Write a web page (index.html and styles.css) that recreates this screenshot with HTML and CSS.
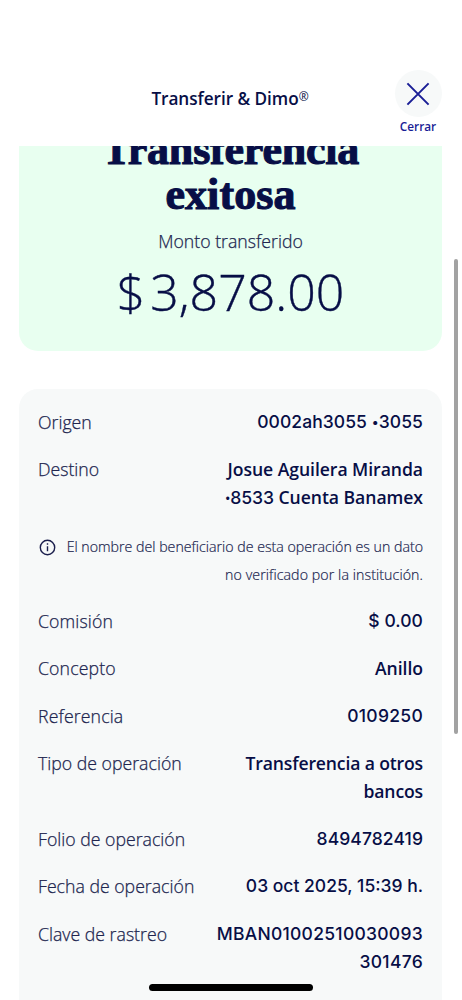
FILE: index.html
```
<!DOCTYPE html>
<html lang="es">
<head>
<meta charset="utf-8">
<title>Transferir &amp; Dimo</title>
<link rel="stylesheet" href="styles.css">
</head>
<body>
<div class="screen">
  <header class="topbar">
    <h1 class="title">Transferir &amp; Dimo<span class="reg">®</span></h1>
    <button class="close">
      <span class="close-circle">
        <svg width="24" height="24" viewBox="0 0 24 24" fill="none" stroke="#1a1e96" stroke-width="2"><path d="M1.4 1.4 22.6 22.6M22.6 1.4 1.4 22.6"/></svg>
      </span>
      <span class="close-label">Cerrar</span>
    </button>
  </header>
  <main class="content">
    <section class="success">
      <h2 class="headline">Transferencia<br><span class="headline-end">exitosa</span></h2>
      <p class="caption">Monto transferido</p>
      <p class="amount"><span class="currency">$</span>3,878.00</p>
    </section>
    <dl class="details">
      <div class="row"><dt>Origen</dt><dd class="num origin">0002ah3055 <span class="dot">•</span>3055</dd></div>
      <div class="row"><dt>Destino</dt><dd>Josue Aguilera Miranda<br><span class="dot">•</span><span class="account">8533</span> Cuenta Banamex</dd></div>
      <div class="note">
        <svg class="info" width="17" height="17" viewBox="0 0 17 17" fill="none" stroke="#1b1f4d" stroke-width="1.4"><circle cx="8.5" cy="8.5" r="7.2"/><path d="M8.5 7.2v5M8.5 4.2v1.6"/></svg>
        <p class="note-text">El nombre del beneficiario de esta operación es un dato<br><span class="note-end">no verificado por la institución.</span></p>
      </div>
      <div class="row"><dt class="spaced">Comisión</dt><dd class="num origin">$ 0.00</dd></div>
      <div class="row"><dt class="spaced">Concepto</dt><dd>Anillo</dd></div>
      <div class="row"><dt class="spaced">Referencia</dt><dd class="num key">0109250</dd></div>
      <div class="row"><dt>Tipo de operación</dt><dd class="tight">Transferencia a otros<br>bancos</dd></div>
      <div class="row"><dt>Folio de operación</dt><dd class="num origin">8494782419</dd></div>
      <div class="row"><dt>Fecha de operación</dt><dd class="num">03 oct 2025, 15:39 h.</dd></div>
      <div class="row"><dt>Clave de rastreo</dt><dd class="num key">MBAN01002510030093<br>301476</dd></div>
    </dl>
  </main>
  <div class="scrollbar"></div>
  <div class="home-indicator"></div>
</div>
</body>
</html>
```
FILE: styles.css
```
* { box-sizing: border-box; margin: 0; padding: 0; }
body { background: #fff; font-family: "Open Sans", sans-serif; color: #070e46; }
.screen { position: relative; width: 462px; height: 1000px; overflow: hidden; display: flex; flex-direction: column; }

.topbar { flex: none; height: 146px; padding: 70px 20px 0; display: grid; grid-template-columns: 48px 1fr 48px; }
.title { grid-column: 2; font-size: 17.2px; font-weight: 600; line-height: 24px; padding: 17px 2px 0 0; text-align: center; white-space: nowrap; letter-spacing: -.05px; }
.reg { font-size: 12px; line-height: 0; position: relative; top: -4px; font-weight: 500; }
.close { border: 0; background: none; display: flex; flex-direction: column; align-items: center; font-family: inherit; color: #1a1e96; }
.close-circle { width: 47px; height: 47px; border-radius: 50%; background: #f7f9f9; display: grid; place-items: center; }
.close-label { font-size: 11.8px; font-weight: 600; line-height: 16px; padding-top: 1px; }

.content { flex: 1; min-height: 0; overflow: hidden; padding: 0 20px 0 19px; }
.success { height: 205px; background: #e8fff0; border-radius: 0 0 19px 19px; text-align: center; overflow: hidden; }
.headline { margin-top: -18px; font: bold 44px/44.7px "Liberation Serif", serif; letter-spacing: -.2px; -webkit-text-stroke: 1.1px #070e46; }
.headline-end { letter-spacing: .1px; }
.caption { margin-top: 12px; font-size: 17.7px; font-weight: 300; line-height: 24px; color: #20254f; -webkit-text-stroke: .25px #20254f; }
.amount { margin-top: 6.6px; font-size: 50px; font-weight: 300; line-height: 64px; -webkit-text-stroke: .4px #070e46; }
.currency { margin-right: 5px; }

.details { margin-top: 38px; min-height: 660px; padding: 18.6px 19px 0; background: #f7f9f9; border-radius: 19px 19px 0 0; }
.row { display: flex; justify-content: space-between; margin-bottom: 19px; line-height: 28.4px; }
.row dt { font-size: 17.7px; font-weight: 300; color: #20254f; -webkit-text-stroke: .25px #20254f; }
.row .spaced { letter-spacing: .12px; }
.row dd { font-size: 17.6px; font-weight: 600; text-align: right; letter-spacing: -.05px; }
.row .num { font-family: Inter, sans-serif; font-size: 17.5px; font-weight: 500; letter-spacing: 0; }
.row .origin { letter-spacing: .08px; }
.row .key { letter-spacing: .28px; }
.row .tight { letter-spacing: -.15px; }
.dot { font-size: 13px; line-height: 0; vertical-align: 1px; }
.account { font-family: Inter, sans-serif; font-weight: 500; line-height: 0; }
.note { display: flex; justify-content: space-between; margin: 20.7px 0 17.5px; line-height: 28.4px; }
.info { margin: 6px 0 0 1px; }
.note-text { font-size: 14.2px; font-weight: 300; color: #20254f; text-align: right; white-space: nowrap; -webkit-text-stroke: .2px #20254f; }
.note-end { letter-spacing: .08px; }

.scrollbar { position: absolute; left: 454px; top: 259px; width: 4px; height: 475px; border-radius: 2px; background: #a2a2a2; }
.home-indicator { position: absolute; left: 149px; top: 984px; width: 164px; height: 6.5px; border-radius: 4px; background: #000; }
```
